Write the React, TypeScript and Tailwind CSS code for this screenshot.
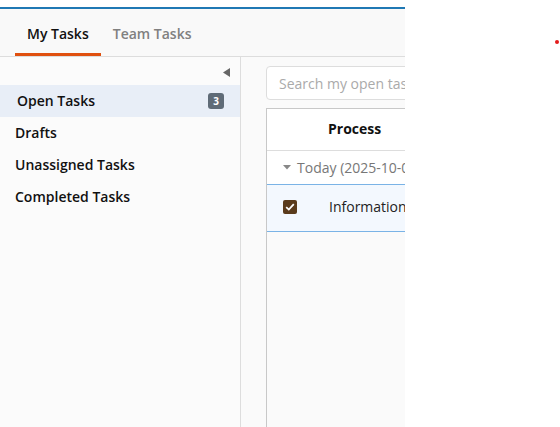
import React from "react";

export default function App() {
  const font = { fontFamily: '"Open Sans", "Noto Sans", sans-serif' };
  return (
    <div className="relative w-[560px] h-[427px] bg-white overflow-hidden" style={font}>
      <div className="w-[405px] h-[427px] flex flex-col overflow-hidden">
        <div className="h-[7px] bg-white shrink-0" />
        <div className="h-[2px] bg-[#1f78b4] shrink-0" />
        {/* tabs */}
        <div className="h-[48px] shrink-0 bg-[#f9f9f9] border-b border-[#dddddd] flex items-end pl-[15px]">
          <div className="h-full flex flex-col">
            <div className="flex-1 flex items-center pt-[4px] px-[12px] text-[14px] font-semibold text-[#111]">My Tasks</div>
            <div className="h-[3px] bg-[#e0500f]" />
          </div>
          <div className="h-full flex flex-col">
            <div className="flex-1 flex items-center pt-[4px] px-[12px] text-[14px] font-semibold text-[#808080]">Team Tasks</div>
            <div className="h-[3px]" />
          </div>
        </div>
        <div className="flex flex-1 min-h-0">
          {/* sidebar */}
          <div className="w-[241px] shrink-0 bg-[#fbfbfb] border-r border-[#dddddd] flex flex-col">
            <div className="h-[28px] flex items-center justify-end pr-[10px] pt-[2px]">
              <svg width="7" height="9" viewBox="0 0 7 9">
                <path d="M7 0 L0 4.5 L7 9 Z" fill="#666" />
              </svg>
            </div>
            <div className="h-[32px] bg-[#e8eef7] flex items-center justify-between pl-[17px] pr-[16px]">
              <span className="text-[14px] font-semibold text-[#111] mb-[2px]">Open Tasks</span>
              <span className="w-[16px] h-[16px] rounded-[3px] bg-[#5f6b77] text-white text-[10px] font-bold flex items-center justify-center">3</span>
            </div>
            {["Drafts", "Unassigned Tasks", "Completed Tasks"].map((t) => (
              <div key={t} className="h-[32px] flex items-center pl-[15px] pb-[2px] text-[14px] font-semibold text-[#111]">{t}</div>
            ))}
          </div>
          {/* main */}
          <div className="flex-1 min-w-0 bg-[#fafafa] pl-[25px] pt-[9px] flex flex-col overflow-hidden">
            <div className="w-[400px] h-[34px] shrink-0 bg-white border border-[#dddddd] rounded-[4px] flex items-center pl-[12px] text-[14px] text-[#aaaaaa] whitespace-nowrap">
              Search my open tasks
            </div>
            <div className="mt-[8px] w-[600px] flex-1 border-l border-t border-[#c8c8c8] bg-[#fafafa] flex flex-col">
              <div className="h-[42px] bg-white border-b border-[#dddddd] flex items-center pl-[61px] pb-[3px] text-[14px] font-bold text-[#111]">Process</div>
              <div className="h-[33px] bg-white flex items-center pl-[16px] text-[14px] text-[#777] whitespace-nowrap">
                <svg width="8" height="5" viewBox="0 0 8 5" className="mr-[6px]">
                  <path d="M0 0 L8 0 L4 4.5 Z" fill="#888" />
                </svg>
                Today (2025-10-01)
              </div>
              <div className="h-[48px] bg-[#f3f8fe] border-y border-[#7ab3e6] flex items-center pl-[16px] pb-[3px] whitespace-nowrap">
                <span className="w-[14px] h-[14px] rounded-[2px] bg-[#5a3b1c] flex items-center justify-center">
                  <svg width="10" height="8" viewBox="0 0 10 8">
                    <path d="M1.2 4.2 L3.8 6.6 L8.8 1.2" stroke="white" strokeWidth="1.8" fill="none" />
                  </svg>
                </span>
                <span className="ml-[32px] text-[14px] text-[#222]">Information Request</span>
              </div>
            </div>
          </div>
        </div>
      </div>
      <div className="absolute left-[555px] top-[40px] w-[4px] h-[4px] rounded-full bg-[#e31b1b]" />
    </div>
  );
}
